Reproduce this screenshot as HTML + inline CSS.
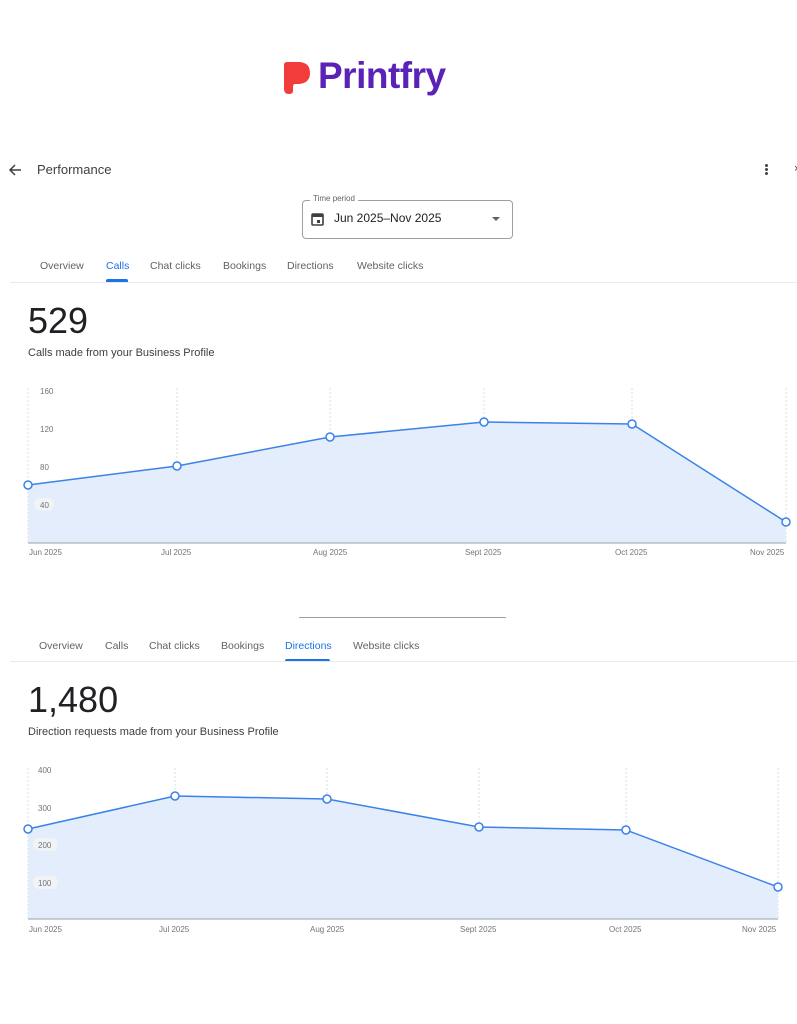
<!DOCTYPE html><html><head><style>
body{margin:0;width:797px;height:1024px;background:#fff;font-family:"Liberation Sans",sans-serif;position:relative;overflow:hidden;color:#202124}
.a{position:absolute;white-space:nowrap}
.tab{font-size:10.5px;color:#5f6368;top:260px}
.ax{font-size:8px;color:#70757a}
</style></head><body>
<svg class="a" style="left:281px;top:61px" width="30" height="34" viewBox="0 0 30 34"><path d="M3 4 Q3 1 6 1 H17 Q29 1 29 12 Q29 22 18 23 H14 Q12 23 12 26 V30 Q12 33 8 33 Q3 33 3 28 Z" fill="#f23b3b"/></svg>
<div class="a" style="left:318px;top:55px;font-size:37px;font-weight:bold;color:#5b22b8;letter-spacing:-0.5px">Printfry</div>
<svg class="a" style="left:8px;top:163px" width="14" height="14" viewBox="0 0 14 14"><path d="M13 7H2M7 2L2 7l5 5" stroke="#3c4043" stroke-width="1.5" fill="none"/></svg>
<div class="a" style="left:37px;top:162px;font-size:13px;color:#3c4043">Performance</div>
<div class="a" style="left:765px;top:164px;width:3px;height:3px;background:#444;border-radius:50%;box-shadow:0 4px #444,0 8px #444"></div>
<div class="a" style="left:794px;top:163px;font-size:11px;color:#444">×</div>
<div class="a" style="left:302px;top:200px;width:209px;height:37px;border:1px solid #9aa0a6;border-radius:4px"></div>
<div class="a" style="left:310px;top:194px;font-size:8px;color:#5f6368;background:#fff;padding:0 3px">Time period</div>
<svg class="a" style="left:311px;top:212px" width="13" height="14" viewBox="0 0 13 14"><rect x="1" y="2" width="11" height="11" rx="1" fill="none" stroke="#3c4043" stroke-width="1.6"/><rect x="1" y="2" width="11" height="3" fill="#3c4043"/><rect x="6" y="8" width="3" height="3" fill="#3c4043"/></svg>
<div class="a" style="left:334px;top:211px;font-size:12px;color:#202124">Jun 2025–Nov 2025</div>
<div class="a" style="left:492px;top:217px;border:4px solid transparent;border-top:4px solid #5f6368;border-bottom:0"></div>
<div class="a tab" style="left:40px">Overview</div><div class="a tab" style="left:106px;color:#1a73e8">Calls</div><div class="a tab" style="left:150px">Chat clicks</div><div class="a tab" style="left:223px">Bookings</div><div class="a tab" style="left:287px">Directions</div><div class="a tab" style="left:357px">Website clicks</div>
<div class="a" style="left:106px;top:279px;width:22px;height:3px;background:#1a73e8;border-radius:2px 2px 0 0"></div>
<div class="a" style="left:10px;top:282px;width:787px;height:1px;background:#e8eaed"></div>
<div class="a" style="left:28px;top:300px;font-size:36px">529</div>
<div class="a" style="left:28px;top:347px;font-size:11px;color:#3c4043">Calls made from your Business Profile</div>
<svg class="a" style="left:0;top:380px" width="797" height="190">
<g stroke="#dadce0" stroke-dasharray="2,2"><line x1="28" y1="8" x2="28" y2="163"/><line x1="177" y1="8" x2="177" y2="163"/><line x1="330" y1="8" x2="330" y2="163"/><line x1="484" y1="8" x2="484" y2="163"/><line x1="632" y1="8" x2="632" y2="163"/><line x1="786" y1="8" x2="786" y2="163"/></g>
<polygon points="28,105 177,86 330,57 484,42 632,44 786,142 786,163 28,163" fill="#e3edfc"/>
<line x1="28" y1="163" x2="786" y2="163" stroke="#9aa0a6"/>
<polyline points="28,105 177,86 330,57 484,42 632,44 786,142" fill="none" stroke="#3b82e8" stroke-width="1.5"/>
<g fill="#fff" stroke="#3b82e8" stroke-width="1.5"><circle cx="28" cy="105" r="4"/><circle cx="177" cy="86" r="4"/><circle cx="330" cy="57" r="4"/><circle cx="484" cy="42" r="4"/><circle cx="632" cy="44" r="4"/><circle cx="786" cy="142" r="4"/></g>
<rect x="34" y="118" width="20" height="13" rx="6" fill="#f1f3f4"/>
<g font-size="8" fill="#70757a" font-family="Liberation Sans"><text x="40" y="14">160</text><text x="40" y="52">120</text><text x="40" y="90">80</text><text x="40" y="128">40</text>
<text x="29" y="175">Jun 2025</text><text x="161" y="175">Jul 2025</text><text x="313" y="175">Aug 2025</text><text x="465" y="175">Sept 2025</text><text x="615" y="175">Oct 2025</text><text x="750" y="175">Nov 2025</text></g></svg>
<div class="a" style="left:299px;top:617px;width:207px;height:1px;background:#9aa0a6"></div>
<div class="a tab" style="top:640px;left:39px">Overview</div><div class="a tab" style="top:640px;left:105px">Calls</div><div class="a tab" style="top:640px;left:149px">Chat clicks</div><div class="a tab" style="top:640px;left:221px">Bookings</div><div class="a tab" style="top:640px;left:285px;color:#1a73e8">Directions</div><div class="a tab" style="top:640px;left:353px">Website clicks</div>
<div class="a" style="left:285px;top:659px;width:45px;height:3px;background:#1a73e8;border-radius:2px 2px 0 0"></div>
<div class="a" style="left:10px;top:661px;width:787px;height:1px;background:#e8eaed"></div>
<div class="a" style="left:28px;top:679px;font-size:36px">1,480</div>
<div class="a" style="left:28px;top:726px;font-size:11px;color:#3c4043">Direction requests made from your Business Profile</div>
<svg class="a" style="left:0;top:760px" width="797" height="190">
<g stroke="#dadce0" stroke-dasharray="2,2"><line x1="28" y1="8" x2="28" y2="159"/><line x1="175" y1="8" x2="175" y2="159"/><line x1="327" y1="8" x2="327" y2="159"/><line x1="479" y1="8" x2="479" y2="159"/><line x1="626" y1="8" x2="626" y2="159"/><line x1="778" y1="8" x2="778" y2="159"/></g>
<polygon points="28,69 175,36 327,39 479,67 626,70 778,127 778,159 28,159" fill="#e3edfc"/>
<line x1="28" y1="159" x2="778" y2="159" stroke="#9aa0a6"/>
<polyline points="28,69 175,36 327,39 479,67 626,70 778,127" fill="none" stroke="#3b82e8" stroke-width="1.5"/>
<g fill="#fff" stroke="#3b82e8" stroke-width="1.5"><circle cx="28" cy="69" r="4"/><circle cx="175" cy="36" r="4"/><circle cx="327" cy="39" r="4"/><circle cx="479" cy="67" r="4"/><circle cx="626" cy="70" r="4"/><circle cx="778" cy="127" r="4"/></g>
<rect x="33" y="78" width="25" height="13" rx="6" fill="#f1f3f4"/><rect x="33" y="116" width="25" height="13" rx="6" fill="#f1f3f4"/>
<g font-size="8" fill="#70757a" font-family="Liberation Sans"><text x="38" y="13">400</text><text x="38" y="51">300</text><text x="38" y="88">200</text><text x="38" y="126">100</text>
<text x="29" y="172">Jun 2025</text><text x="159" y="172">Jul 2025</text><text x="310" y="172">Aug 2025</text><text x="460" y="172">Sept 2025</text><text x="609" y="172">Oct 2025</text><text x="742" y="172">Nov 2025</text></g></svg>
</body></html>
